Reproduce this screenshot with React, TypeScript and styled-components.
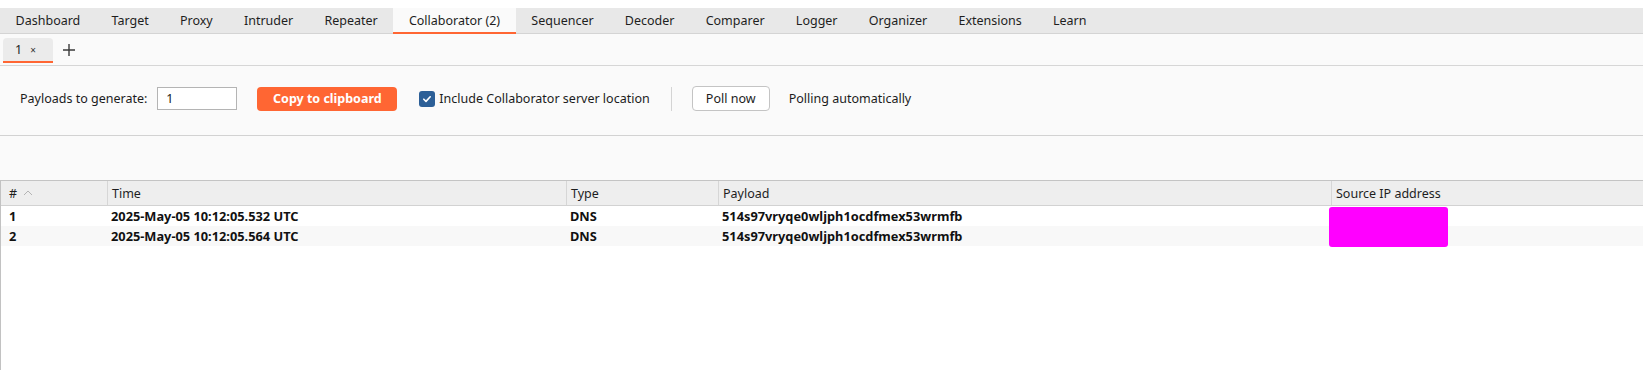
import React from "react";
import styled, { createGlobalStyle } from "styled-components";

const GlobalStyle = createGlobalStyle`
  html, body { margin: 0; padding: 0; background: #ffffff; }
  body {
    font-family: "Noto Sans", "Open Sans", sans-serif;
    font-size: 12.5px;
    color: #1c1c1c;
  }
  * { box-sizing: border-box; }
`;

const Page = styled.div`
  height: 370px;
  display: flex;
  flex-direction: column;
  overflow: hidden;
  background: #fafafa;
`;

const TopGap = styled.div`
  flex: none;
  height: 8px;
  background: #ffffff;
`;

const TabBar = styled.nav`
  flex: none;
  display: flex;
  height: 26px;
  background: #e8e8e8;
  border-bottom: 1px solid #d4d4d4;
`;

const Tab = styled.div<{ $active?: boolean }>`
  display: flex;
  align-items: center;
  height: 26px;
  padding: 0 15.6px 1px;
  white-space: nowrap;
  color: #1e1e1e;
  background: ${(p) => (p.$active ? "#fafafa" : "transparent")};
  box-shadow: ${(p) => (p.$active ? "inset 0 -2px 0 #ff6633" : "none")};
`;

const SubTabRow = styled.div`
  flex: none;
  display: flex;
  align-items: flex-start;
  height: 32px;
  padding: 4px 0 0 3px;
  border-bottom: 1px solid #d6d6d6;
  background: #fafafa;
`;

const SubTab = styled.div`
  display: flex;
  align-items: center;
  width: 50px;
  height: 25px;
  padding: 0 0 2px 12px;
  background: #ebebeb;
  border-radius: 4px 4px 0 0;
  box-shadow: inset 0 -2px 0 #ff6633;
`;

const SubTabLabel = styled.span`
  color: #1e1e1e;
`;

const CloseMark = styled.span`
  margin-left: 8px;
  font-size: 10px;
  color: #333;
`;

const AddButton = styled.div`
  display: flex;
  align-items: center;
  justify-content: center;
  width: 16px;
  height: 16px;
  margin: 4px 0 0 8px;
`;

const Toolbar = styled.div`
  flex: none;
  display: flex;
  align-items: center;
  height: 70px;
  padding: 0 0 4px 20px;
  border-bottom: 1px solid #d2d2d2;
  background: #fafafa;
`;

const Label = styled.span<{ $ml?: number }>`
  margin-left: ${(p) => p.$ml ?? 0}px;
  white-space: nowrap;
  color: #1c1c1c;
`;

const NumberInput = styled.div`
  display: flex;
  align-items: center;
  width: 80px;
  height: 23px;
  margin-left: 10px;
  padding-left: 8px;
  background: #ffffff;
  border: 1px solid #b4b4b4;
`;

const PrimaryButton = styled.div`
  display: flex;
  align-items: center;
  justify-content: center;
  width: 140px;
  height: 24px;
  margin-left: 20px;
  background: #ff6633;
  color: #ffffff;
  font-weight: 700;
  border-radius: 4px;
`;

const CheckBox = styled.div`
  display: flex;
  align-items: center;
  justify-content: center;
  width: 16px;
  height: 16px;
  margin-left: 22px;
  background: #2c5f97;
  border-radius: 3px;
`;

const Separator = styled.div`
  width: 1px;
  height: 24px;
  margin-left: 21px;
  background: #d4d4d4;
`;

const SecondaryButton = styled.div`
  display: flex;
  align-items: center;
  justify-content: center;
  width: 78px;
  height: 25px;
  margin-left: 20px;
  background: #ffffff;
  border: 1px solid #c4c4c4;
  border-radius: 4px;
`;

const Spacer = styled.div`
  flex: none;
  height: 44px;
  background: #fafafa;
`;

const Table = styled.div`
  flex: 1;
  display: flex;
  flex-direction: column;
  background: #ffffff;
  border-left: 1px solid #c2c2c2;
`;

const columns = "106px 459px 152px 613px 1fr";

const HeaderRow = styled.div`
  display: grid;
  grid-template-columns: ${columns};
  height: 26px;
  background: #eeeeee;
  border-top: 1px solid #c4c4c4;
  border-bottom: 1px solid #d2d2d2;
`;

const HeaderCell = styled.div<{ $first?: boolean }>`
  display: flex;
  align-items: center;
  gap: 6px;
  padding-left: ${(p) => (p.$first ? 8 : 4)}px;
  border-left: ${(p) => (p.$first ? "none" : "1px solid #d6d6d6")};
  color: #1e1e1e;
  white-space: nowrap;
`;

const Body = styled.div`
  position: relative;
  flex: 1;
`;

const Row = styled.div<{ $alt?: boolean }>`
  display: grid;
  grid-template-columns: ${columns};
  height: 20px;
  background: ${(p) => (p.$alt ? "#f8f8f8" : "#ffffff")};
`;

const Cell = styled.div<{ $first?: boolean }>`
  display: flex;
  align-items: center;
  padding-left: ${(p) => (p.$first ? 8 : 4)}px;
  font-size: 12.8px;
  font-weight: 700;
  color: #111;
  white-space: nowrap;
`;

const Redaction = styled.div`
  position: absolute;
  left: 1328px;
  top: 1px;
  width: 119px;
  height: 40px;
  background: #ff00ff;
  border-radius: 3px;
`;

const tabs = [
  "Dashboard",
  "Target",
  "Proxy",
  "Intruder",
  "Repeater",
  "Collaborator (2)",
  "Sequencer",
  "Decoder",
  "Comparer",
  "Logger",
  "Organizer",
  "Extensions",
  "Learn",
];

const rows = [
  { n: "1", time: "2025-May-05 10:12:05.532 UTC", type: "DNS", payload: "514s97vryqe0wljph1ocdfmex53wrmfb" },
  { n: "2", time: "2025-May-05 10:12:05.564 UTC", type: "DNS", payload: "514s97vryqe0wljph1ocdfmex53wrmfb" },
];

export default function App() {
  return (
    <>
      <GlobalStyle />
      <Page>
        <TopGap />
        <TabBar>
          {tabs.map((t) => (
            <Tab key={t} $active={t.startsWith("Collaborator")}>
              {t}
            </Tab>
          ))}
        </TabBar>
        <SubTabRow>
          <SubTab>
            <SubTabLabel>1</SubTabLabel>
            <CloseMark>×</CloseMark>
          </SubTab>
          <AddButton>
            <svg width="14" height="14" viewBox="0 0 14 14">
              <path d="M7 1v12M1 7h12" stroke="#3a3a3a" strokeWidth="1.4" />
            </svg>
          </AddButton>
        </SubTabRow>
        <Toolbar>
          <Label>Payloads to generate:</Label>
          <NumberInput>1</NumberInput>
          <PrimaryButton>Copy to clipboard</PrimaryButton>
          <CheckBox>
            <svg width="10" height="10" viewBox="0 0 10 10">
              <path d="M1.8 5.2l2.2 2.2 4.2-4.6" stroke="#fff" strokeWidth="1.6" fill="none" strokeLinecap="round" strokeLinejoin="round" />
            </svg>
          </CheckBox>
          <Label $ml={4}>Include Collaborator server location</Label>
          <Separator />
          <SecondaryButton>Poll now</SecondaryButton>
          <Label $ml={19}>Polling automatically</Label>
        </Toolbar>
        <Spacer />
        <Table>
          <HeaderRow>
            <HeaderCell $first>
              #
              <svg width="10" height="6" viewBox="0 0 10 6">
                <path d="M1 5l4-4 4 4" stroke="#b4b4b4" strokeWidth="1" fill="none" />
              </svg>
            </HeaderCell>
            <HeaderCell>Time</HeaderCell>
            <HeaderCell>Type</HeaderCell>
            <HeaderCell>Payload</HeaderCell>
            <HeaderCell>Source IP address</HeaderCell>
          </HeaderRow>
          <Body>
            {rows.map((r, i) => (
              <Row key={r.n} $alt={i % 2 === 1}>
                <Cell $first>{r.n}</Cell>
                <Cell>{r.time}</Cell>
                <Cell>{r.type}</Cell>
                <Cell>{r.payload}</Cell>
                <Cell />
              </Row>
            ))}
            <Redaction />
          </Body>
        </Table>
      </Page>
    </>
  );
}
